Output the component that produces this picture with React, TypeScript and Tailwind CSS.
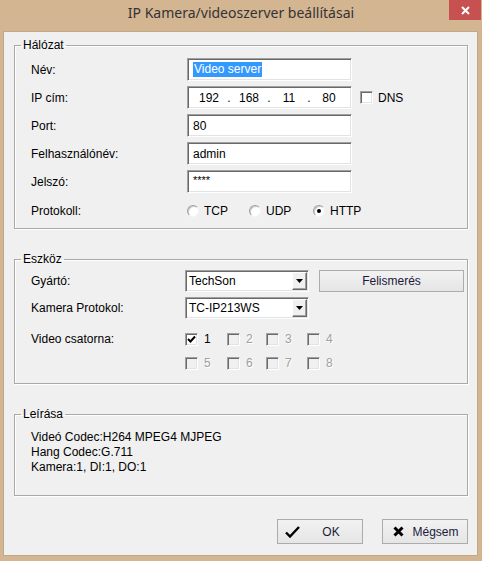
import type { ReactNode } from 'react'

const sunken =
  'border border-t-[#a0a0a0] border-l-[#a0a0a0] border-r-white border-b-white shadow-[inset_1px_1px_0_#696969,inset_-1px_-1px_0_#e3e3e3]'

function TextBox({ children, className = '' }: { children?: ReactNode; className?: string }) {
  return (
    <div className={`h-[23px] w-[165px] bg-white ${sunken} flex items-center pl-[5px] ${className}`}>{children}</div>
  )
}

function CheckBox({ checked = false, disabled = false }: { checked?: boolean; disabled?: boolean }) {
  return (
    <div
      className={`w-[13px] h-[13px] shrink-0 flex items-center justify-center ${sunken} ${disabled ? 'bg-[#f0f0f0]' : 'bg-white'}`}
    >
      {checked && (
        <svg width="9" height="9" viewBox="0 0 9 9">
          <path d="M1 4 L3.5 6.5 L8 1.5" stroke="#000" strokeWidth="2" fill="none" />
        </svg>
      )}
    </div>
  )
}

function Radio({ label, checked = false, w }: { label: string; checked?: boolean; w: string }) {
  return (
    <div className={`flex items-center gap-[5px] ${w}`}>
      <div
        className="w-[12px] h-[12px] rounded-full bg-white border border-t-[#a0a0a0] border-l-[#a0a0a0] border-r-[#f4f4f4] border-b-[#f4f4f4] shadow-[inset_1px_1px_0_#c8c8c8] flex items-center justify-center"
      >
        {checked && <div className="w-[4px] h-[4px] rounded-full bg-black" />}
      </div>
      <span>{label}</span>
    </div>
  )
}

function Combo({ value }: { value: string }) {
  return (
    <div className={`h-[22px] w-[124px] bg-white ${sunken} flex items-center`}>
      <span className="flex-1 pl-[3px]">{value}</span>
      <div className="w-[15px] h-[18px] mr-[1px] bg-[#f0f0f0] border border-t-white border-l-white border-r-[#696969] border-b-[#696969] shadow-[inset_-1px_-1px_0_#a0a0a0] flex items-center justify-center">
        <svg width="7" height="4" viewBox="0 0 7 4">
          <path d="M0 0 H7 L3.5 4 Z" fill="#000" />
        </svg>
      </div>
    </div>
  )
}

function Group({ title, className = '', children }: { title: string; className?: string; children: ReactNode }) {
  return (
    <fieldset className={`w-[454px] ml-[10px] border border-[#a9a9a9] shadow-[inset_1px_1px_0_#fff,1px_1px_0_#fff] ${className}`}>
      <legend className="ml-[6px] px-[2px] leading-[14px]">{title}</legend>
      {children}
    </fieldset>
  )
}

function Row({ label, lw = 'w-[156px]', children }: { label: string; lw?: string; children: ReactNode }) {
  return (
    <div className="flex items-center">
      <span className={`${lw} shrink-0`}>{label}</span>
      {children}
    </div>
  )
}

function Channel({ n, checked, w }: { n: number; checked?: boolean; w: string }) {
  const on = n === 1
  return (
    <div className={`flex items-center gap-[6px] h-[13px] leading-[13px] ${w}`}>
      <CheckBox checked={checked} disabled={!on} />
      <span className={on ? 'text-black' : 'text-[#a0a0a0] [text-shadow:1px_1px_0_#fff]'}>{n}</span>
    </div>
  )
}

export default function App() {
  return (
    <div className="w-[482px] h-[561px] bg-[#d4b592] flex flex-col font-['Liberation_Sans',Arial,sans-serif] text-[12px] text-black">
      <div className="h-[31px] shrink-0 grid grid-cols-[1fr_auto_1fr]">
        <div />
        <div className="pt-[3px] font-['Noto_Sans',sans-serif] text-[14px] leading-[20px] text-[#333]">
          IP Kamera/videoszerver beállításai
        </div>
        <div className="justify-self-end">
          <div className="w-[32px] h-[20px] mr-[1px] bg-[#c75050] flex items-center justify-center">
            <svg width="9" height="9" viewBox="0 0 9 9">
              <path d="M1 1 L8 8 M8 1 L1 8" stroke="#fff" strokeWidth="2" />
            </svg>
          </div>
        </div>
      </div>

      <div className="w-[475px] ml-[3px] h-[525px] bg-[#f0f0f0] border border-[#bfa989]">
        <Group title="Hálózat" className="mt-[6px] pb-[10px]">
          <div className="pl-[16px] pt-[6px] flex flex-col gap-[5px]">
            <Row label="Név:">
              <TextBox className="pl-[4px]">
                <span className="bg-[#3399ff] text-white leading-[15px] px-[1px]">Video server</span>
              </TextBox>
            </Row>
            <Row label="IP cím:">
              <div className={`h-[23px] w-[165px] bg-white ${sunken} flex items-center pl-[6px]`}>
                <span className="w-[30px] text-center">192</span>
                <span className="w-[10px] text-center">.</span>
                <span className="w-[30px] text-center">168</span>
                <span className="w-[10px] text-center">.</span>
                <span className="w-[30px] text-center">11</span>
                <span className="w-[10px] text-center">.</span>
                <span className="w-[30px] text-center">80</span>
              </div>
              <div className="ml-[8px]">
                <CheckBox />
              </div>
              <span className="ml-[5px]">DNS</span>
            </Row>
            <Row label="Port:">
              <TextBox>80</TextBox>
            </Row>
            <Row label="Felhasználónév:">
              <TextBox>admin</TextBox>
            </Row>
            <Row label="Jelszó:">
              <TextBox>
                <span className="self-start pt-[1px] text-[11px]">****</span>
              </TextBox>
            </Row>
            <div className="flex items-center mt-[6px] h-[14px]">
              <span className="w-[156px] shrink-0">Protokoll:</span>
              <Radio label="TCP" w="w-[62px]" />
              <Radio label="UDP" w="w-[64px]" />
              <Radio label="HTTP" w="w-[64px]" checked />
            </div>
          </div>
        </Group>

        <Group title="Eszköz" className="mt-[23px] pb-[13px]">
          <div className="pl-[16px] pt-[4px] flex flex-col gap-[5px]">
            <Row label="Gyártó:" lw="w-[154px]">
              <Combo value="TechSon" />
              <button className="ml-[10px] w-[145px] h-[22px] border border-[#acacac] bg-gradient-to-b from-[#f2f2f2] to-[#e5e5e5] text-[#1a1a3a]">
                Felismerés
              </button>
            </Row>
            <Row label="Kamera Protokol:" lw="w-[154px]">
              <Combo value="TC-IP213WS" />
            </Row>
            <div className="flex mt-[9px]">
              <span className="w-[154px] shrink-0 leading-[13px]">Video csatorna:</span>
              <div className="flex flex-col gap-[11px]">
                <div className="flex">
                  <Channel n={1} checked w="w-[42px]" />
                  <Channel n={2} w="w-[39px]" />
                  <Channel n={3} w="w-[41px]" />
                  <Channel n={4} w="w-[40px]" />
                </div>
                <div className="flex">
                  <Channel n={5} w="w-[42px]" />
                  <Channel n={6} w="w-[39px]" />
                  <Channel n={7} w="w-[41px]" />
                  <Channel n={8} w="w-[40px]" />
                </div>
              </div>
            </div>
          </div>
        </Group>

        <Group title="Leírása" className="mt-[23px] pb-[20px]">
          <div className="pl-[16px] pt-[9px] leading-[15px]">
            <div>Videó Codec:H264 MPEG4 MJPEG</div>
            <div>Hang Codec:G.711</div>
            <div>Kamera:1, DI:1, DO:1</div>
          </div>
        </Group>

        <div className="flex justify-end gap-[19px] mt-[23px] mr-[9px] text-[#1a1a3a]">
          <button className="w-[86px] h-[25px] border border-[#acacac] bg-gradient-to-b from-[#f2f2f2] to-[#e5e5e5] flex items-center pl-[7px]">
            <svg width="15" height="12" viewBox="0 0 15 12">
              <path d="M1 6.5 L5 10.5 L14 1" stroke="#000" strokeWidth="2.4" fill="none" />
            </svg>
            <span className="flex-1 text-center">OK</span>
          </button>
          <button className="w-[86px] h-[25px] border border-[#acacac] bg-gradient-to-b from-[#f2f2f2] to-[#e5e5e5] flex items-center pl-[10px]">
            <svg width="11" height="11" viewBox="0 0 11 11">
              <path d="M1.5 1.5 L9.5 9.5 M9.5 1.5 L1.5 9.5" stroke="#000" strokeWidth="3" />
            </svg>
            <span className="flex-1 text-center">Mégsem</span>
          </button>
        </div>
      </div>
    </div>
  )
}
